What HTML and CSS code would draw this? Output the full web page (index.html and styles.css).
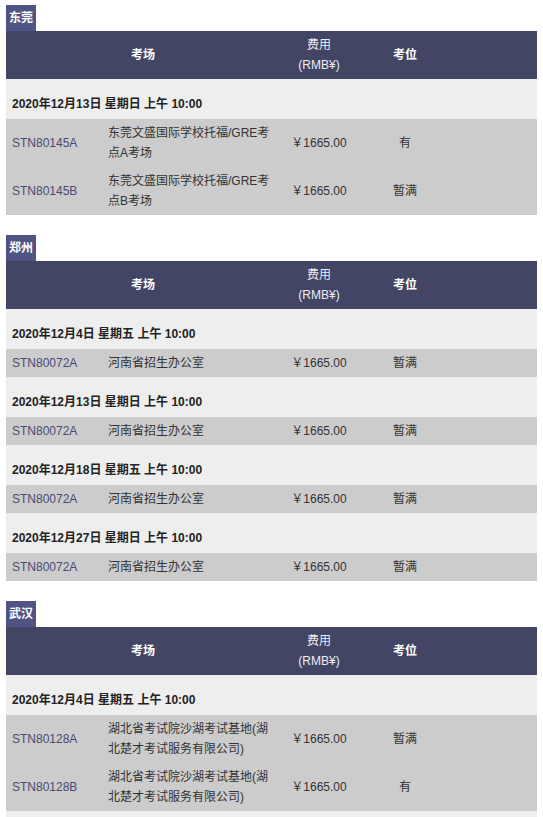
FILE: index.html
```html
<!DOCTYPE html>
<html lang="zh-CN">
<head>
<meta charset="utf-8">
<title>考场</title>
<link rel="stylesheet" href="styles.css">
</head>
<body>
<div class="page">

<section class="city">
  <div class="city-label">东莞</div>
  <table class="seats">
    <colgroup><col class="c1"><col class="c2"><col class="c3"><col class="c4"><col class="c5"></colgroup>
    <thead>
      <tr><th colspan="2">考场</th><th class="fee-h">费用<br>(RMB¥)</th><th>考位</th><th></th></tr>
    </thead>
    <tbody>
      <tr class="date"><td colspan="5">2020年12月13日 星期日 上午 10:00</td></tr>
      <tr class="row"><td class="code">STN80145A</td><td>东莞文盛国际学校托福/GRE考点A考场</td><td class="center">￥1665.00</td><td class="center">有</td><td></td></tr>
      <tr class="row"><td class="code">STN80145B</td><td>东莞文盛国际学校托福/GRE考点B考场</td><td class="center">￥1665.00</td><td class="center">暂满</td><td></td></tr>
    </tbody>
  </table>
</section>

<section class="city">
  <div class="city-label">郑州</div>
  <table class="seats">
    <colgroup><col class="c1"><col class="c2"><col class="c3"><col class="c4"><col class="c5"></colgroup>
    <thead>
      <tr><th colspan="2">考场</th><th class="fee-h">费用<br>(RMB¥)</th><th>考位</th><th></th></tr>
    </thead>
    <tbody>
      <tr class="date"><td colspan="5">2020年12月4日 星期五 上午 10:00</td></tr>
      <tr class="row"><td class="code">STN80072A</td><td>河南省招生办公室</td><td class="center">￥1665.00</td><td class="center">暂满</td><td></td></tr>
      <tr class="date"><td colspan="5">2020年12月13日 星期日 上午 10:00</td></tr>
      <tr class="row"><td class="code">STN80072A</td><td>河南省招生办公室</td><td class="center">￥1665.00</td><td class="center">暂满</td><td></td></tr>
      <tr class="date"><td colspan="5">2020年12月18日 星期五 上午 10:00</td></tr>
      <tr class="row"><td class="code">STN80072A</td><td>河南省招生办公室</td><td class="center">￥1665.00</td><td class="center">暂满</td><td></td></tr>
      <tr class="date"><td colspan="5">2020年12月27日 星期日 上午 10:00</td></tr>
      <tr class="row"><td class="code">STN80072A</td><td>河南省招生办公室</td><td class="center">￥1665.00</td><td class="center">暂满</td><td></td></tr>
    </tbody>
  </table>
</section>

<section class="city">
  <div class="city-label">武汉</div>
  <table class="seats">
    <colgroup><col class="c1"><col class="c2"><col class="c3"><col class="c4"><col class="c5"></colgroup>
    <thead>
      <tr><th colspan="2">考场</th><th class="fee-h">费用<br>(RMB¥)</th><th>考位</th><th></th></tr>
    </thead>
    <tbody>
      <tr class="date"><td colspan="5">2020年12月4日 星期五 上午 10:00</td></tr>
      <tr class="row"><td class="code">STN80128A</td><td>湖北省考试院沙湖考试基地(湖北楚才考试服务有限公司)</td><td class="center">￥1665.00</td><td class="center">暂满</td><td></td></tr>
      <tr class="row"><td class="code">STN80128B</td><td>湖北省考试院沙湖考试基地(湖北楚才考试服务有限公司)</td><td class="center">￥1665.00</td><td class="center">有</td><td></td></tr>
      <tr class="date"><td colspan="5"></td></tr>
    </tbody>
  </table>
</section>

</div>
</body>
</html>
```

FILE: styles.css
```css
html, body {
  margin: 0;
  padding: 0;
  background: #ffffff;
}

.page {
  padding: 5px 6px;
  font-family: "Liberation Sans", Arial, "Noto Sans CJK SC", sans-serif;
  font-size: 12px;
  line-height: 20px;
  color: #333333;
}

.city {
  margin-bottom: 20px;
}

.city-label {
  display: inline-block;
  vertical-align: top;
  background: #4f5484;
  color: #ffffff;
  font-weight: bold;
  font-size: 12px;
  line-height: 20px;
  padding: 3px 3px;
}

.seats {
  width: 531px;
  table-layout: fixed;
  border-collapse: collapse;
  border-spacing: 0;
}

.c1 { width: 96px; }
.c2 { width: 178px; }
.c3 { width: 78px; }
.c4 { width: 94px; }
.c5 { width: 85px; }

.seats th {
  background: #424563;
  color: #ffffff;
  font-weight: bold;
  text-align: center;
  vertical-align: middle;
  padding: 4px 6px;
  line-height: 20px;
  height: 40px;
}

.seats th.fee-h {
  font-weight: normal;
  color: #eceef8;
}

.seats td {
  padding: 4px 6px;
  vertical-align: middle;
  line-height: 20px;
}

.date td {
  background: #eeeeee;
  font-weight: bold;
  color: #222222;
  padding: 15px 6px 5px;
  height: 20px;
}

.row td {
  background: #cccccc;
  color: #333333;
}

.row td.code {
  color: #4a4a72;
}

.row td.center {
  text-align: center;
}
```
